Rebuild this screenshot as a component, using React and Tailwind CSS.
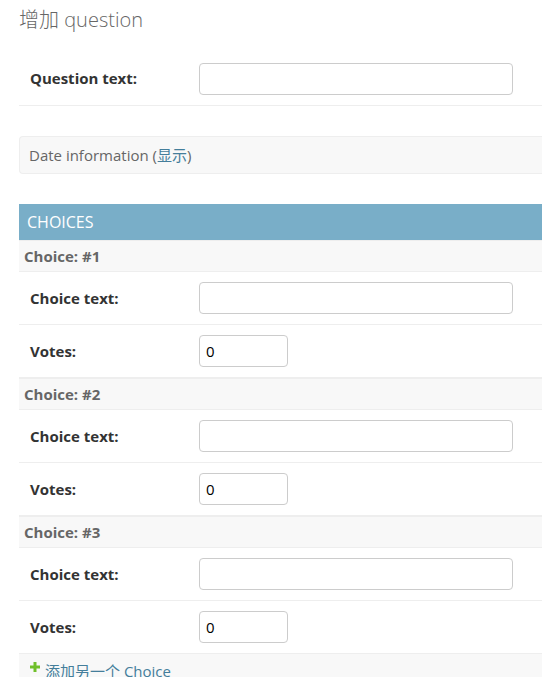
import React from "react";

const font = {
  fontFamily: '"Open Sans", "Noto Sans CJK SC", sans-serif',
};

// satu baris field: label di kiri, input di kanan
function FieldRow({ label, value, small }) {
  return (
    <div className="flex items-center h-[53px] border-b border-[#eee] pl-[11px]">
      <label className="w-[169px] text-[15px] font-bold text-[#333]">{label}</label>
      <input
        defaultValue={value}
        className={`h-[32px] border border-[#ccc] rounded-[4px] px-[6px] text-[15px] text-black bg-white ${
          small ? "w-[89px]" : "w-[314px]"
        }`}
      />
    </div>
  );
}

function ChoiceGroup({ n }) {
  return (
    <div>
      <div className="h-[32px] flex items-center bg-[#f8f8f8] border-t border-[#eee] border-b pl-[5px] text-[15px] font-bold text-[#666]">
        Choice: #{n}
      </div>
      <FieldRow label="Choice text:" />
      <FieldRow label="Votes:" value="0" small />
    </div>
  );
}

export default function App() {
  return (
    <div style={font} className="bg-white w-[542px] h-[677px] overflow-hidden pl-[19px]">
      <h1 className="pt-[6px] text-[20px] font-light text-[#666] leading-[28px]">
        增加 question
      </h1>

      <div className="mt-[18px] border-b border-[#eee]">
        <div className="flex items-center h-[53px] pl-[11px]">
          <label className="w-[169px] text-[15px] font-bold text-[#333]">Question text:</label>
          <input className="h-[32px] w-[314px] border border-[#ccc] rounded-[4px] bg-white" />
        </div>
      </div>

      <div className="mt-[30px] h-[38px] flex items-center bg-[#f8f8f8] border border-[#eee] rounded-l-[4px] border-r-0 pl-[9px] text-[15px] text-[#666]">
        Date information (<span className="text-[#447e9b]">显示</span>)
      </div>

      <div className="mt-[30px]">
        <div className="h-[36px] flex items-center bg-[#79aec8] pl-[8px] text-[16px] text-white uppercase">
          Choices
        </div>
        <div>
          <ChoiceGroup n={1} />
          <ChoiceGroup n={2} />
          <ChoiceGroup n={3} />
        </div>
        <div className="bg-[#f8f8f8] border-t border-[#eee] -mt-px h-[40px] pt-[7px] pl-[11px] text-[15px] text-[#447e9b] flex items-start">
          <svg width="10" height="10" viewBox="0 0 10 10" className="mt-[1px] mr-[5px] shrink-0">
            <path d="M3.5 0h3v3.5H10v3H6.5V10h-3V6.5H0v-3h3.5z" fill="#70bf2b" />
          </svg>
          <span className="leading-[22px] -mt-[1px]">添加另一个 Choice</span>
        </div>
      </div>
    </div>
  );
}
